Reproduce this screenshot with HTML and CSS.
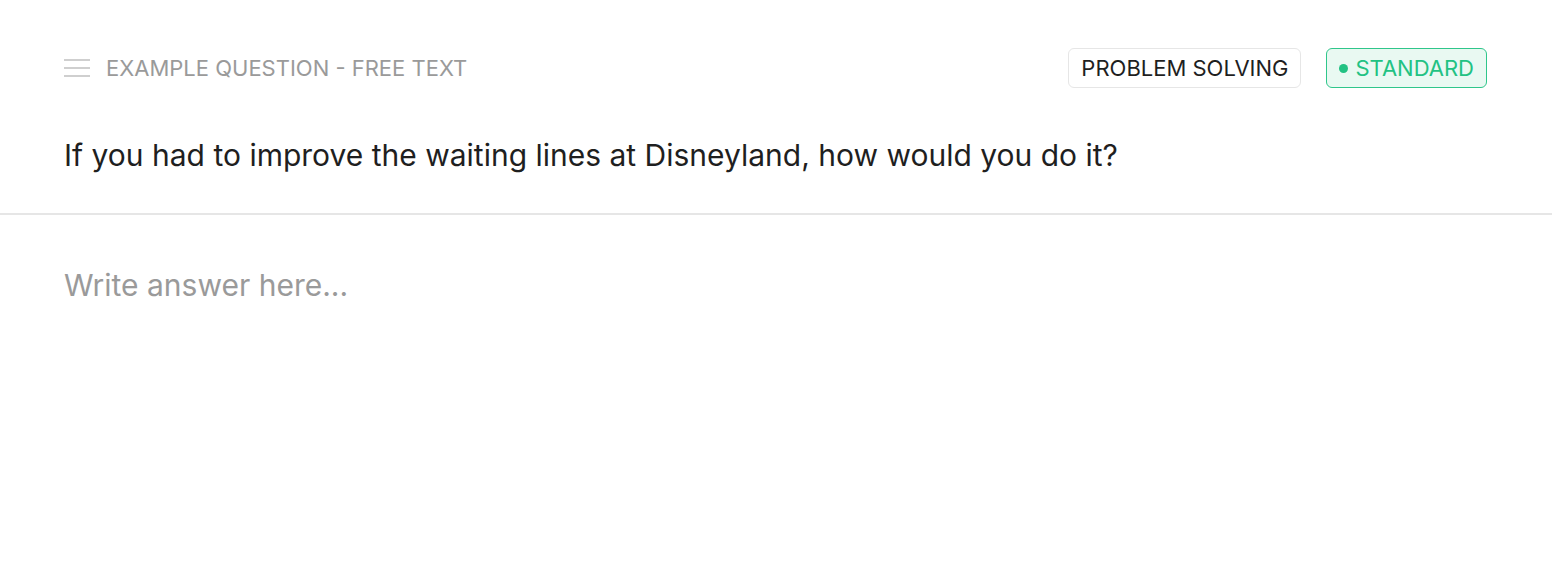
FILE: index.html
```html
<!DOCTYPE html>
<html lang="en">
<head>
<meta charset="utf-8">
<title>Example question</title>
<link rel="stylesheet" href="styles.css">
</head>
<body>
<div class="card">
  <div class="top">
    <div class="header">
      <div class="title">
        <svg class="handle" width="26" height="20" viewBox="0 0 26 20" aria-hidden="true">
          <rect x="0" y="1" width="26" height="2" fill="#cfcfcf"/>
          <rect x="0" y="9" width="26" height="2" fill="#cfcfcf"/>
          <rect x="0" y="17" width="26" height="2" fill="#cfcfcf"/>
        </svg>
        <span class="label">EXAMPLE QUESTION - FREE TEXT</span>
      </div>
      <div class="badges">
        <span class="badge">PROBLEM SOLVING</span>
        <span class="badge badge-green"><span class="dot"></span>STANDARD</span>
      </div>
    </div>
    <p class="question">If you had to improve the waiting lines at Disneyland, how would you do it?</p>
  </div>
  <div class="answer">Write answer here...</div>
</div>
</body>
</html>
```
FILE: styles.css
```css
html, body {
  margin: 0;
  padding: 0;
  background: #ffffff;
}
body {
  font-family: Inter, "Noto Sans", "Liberation Sans", sans-serif;
  color: #1f1f1f;
}
.top {
  padding: 48px 65px 37px 64px;
  border-bottom: 2px solid #e6e6e6;
}
.header {
  display: flex;
  align-items: center;
  justify-content: space-between;
  height: 40px;
}
.title {
  display: flex;
  align-items: center;
  gap: 16px;
}
.handle {
  display: block;
}
.label {
  font-size: 22px;
  color: #9a9a9a;
}
.badges {
  display: flex;
  gap: 25px;
}
.badge {
  box-sizing: border-box;
  height: 40px;
  display: flex;
  align-items: center;
  gap: 7px;
  padding: 0 12px;
  border: 1px solid #e6e6e6;
  border-radius: 6px;
  font-size: 22px;
  color: #1f1f1f;
  background: #fff;
}
.badge-green {
  border-color: #2fc68b;
  background: #e9f9f2;
  color: #22c283;
}
.dot {
  width: 9px;
  height: 9px;
  border-radius: 50%;
  background: #22c283;
}
.question {
  margin: 46px 0 0;
  font-size: 30px;
  line-height: 42px;
  color: #1f1f1f;
}
.answer {
  padding: 49px 64px 0;
  font-size: 30px;
  line-height: 42px;
  color: #9a9a9a;
}
```
